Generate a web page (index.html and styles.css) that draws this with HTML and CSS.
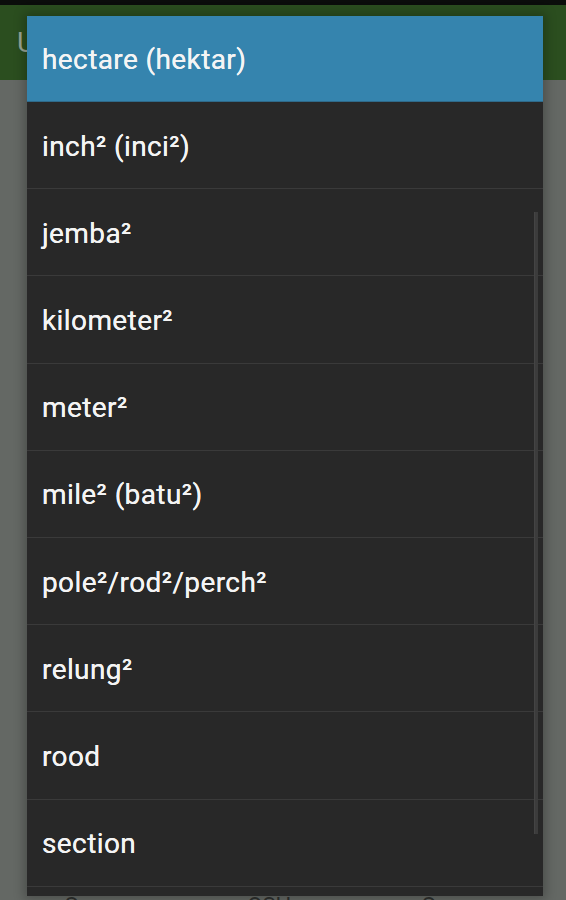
FILE: index.html
```html
<!DOCTYPE html>
<html>
<head>
<meta charset="utf-8">
<link rel="stylesheet" href="styles.css">
</head>
<body>
<div class="status"></div>
<div class="appbar"><span class="title">Unit Converter</span></div>
<div class="content">
  <div class="spacer"></div>
  <div class="tabs"><span>Gram</span><span>OSH</span><span>Gram</span></div>
</div>
<div class="dialog">
  <div class="item selected">hectare (hektar)</div>
  <div class="item">inch² (inci²)</div>
  <div class="item">jemba²</div>
  <div class="item">kilometer²</div>
  <div class="item">meter²</div>
  <div class="item">mile² (batu²)</div>
  <div class="item">pole²/rod²/perch²</div>
  <div class="item">relung²</div>
  <div class="item">rood</div>
  <div class="item">section</div>
  <div class="item last"></div>
  <div class="scrollbar"></div>
</div>
</body>
</html>
```
FILE: styles.css
```css
html, body {
  margin: 0;
  padding: 0;
  width: 566px;
  height: 900px;
  overflow: hidden;
  background: #646864;
  font-family: Roboto, "Liberation Sans", sans-serif;
}
.status {
  height: 5px;
  background: #0b0d0b;
}
.appbar {
  height: 75px;
  background: #2b4e1f;
  display: flex;
  align-items: center;
  padding-left: 17px;
}
.title {
  color: #9aa596;
  font-size: 28px;
}
.content {
  display: flex;
  flex-direction: column;
}
.spacer {
  height: 813px;
}
.tabs {
  display: flex;
  padding-left: 64px;
  gap: 130px;
  color: #2e302e;
  font-size: 22px;
}
.dialog {
  position: absolute;
  left: 27px;
  top: 16px;
  width: 516px;
  height: 880px;
  background: #282828;
  box-shadow: 0 0 10px 3px rgba(0,0,0,0.25);
  overflow: hidden;
}
.item {
  box-sizing: border-box;
  height: 87.2px;
  display: flex;
  align-items: center;
  padding-left: 15px;
  padding-top: 2px;
  color: #f4f4f4;
  font-size: 28px;
  font-weight: 400;
  letter-spacing: 0.4px;
  text-shadow: 0 0 0.6px #ffffff;
  border-bottom: 1.5px solid #3a3a3a;
}
.item.selected {
  background: #3584ae;
  height: 86px;
  border-bottom: 1px solid #2f6a8a;
}
.scrollbar {
  position: absolute;
  left: 507px;
  top: 196px;
  width: 3px;
  height: 622px;
  background: #3c3c3c;
  border-left: 1px solid #444;
}
```
